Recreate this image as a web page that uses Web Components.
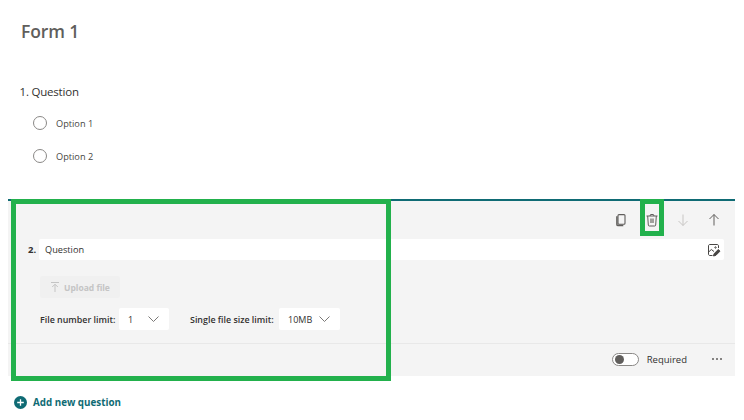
<!DOCTYPE html>
<html>
<head>
<meta charset="utf-8">
<style>
    html, body { margin: 0; background: #fff; }
    body { width: 744px; height: 420px; overflow: hidden; font-family: 'Open Sans', 'Noto Sans', sans-serif; }
</style>
</head>
<body>
<form-page>
    <form-title>Form 1</form-title>
    <question-preview label="1. Question">
        <radio-option>Option 1</radio-option>
        <radio-option>Option 2</radio-option>
    </question-preview>
    <question-editor number="2." title="Question"></question-editor>
    <add-question>Add new question</add-question>
</form-page>

<script>
class FormPage extends HTMLElement {
    constructor() {
        super();
        this.attachShadow({ mode: 'open' });
        this.shadowRoot.innerHTML = `
            <style>
                :host { display: flex; flex-direction: column; width: 744px; height: 420px; position: relative; }
            </style>
            <slot></slot>
        `;
    }
}

class FormTitle extends HTMLElement {
    constructor() {
        super();
        this.attachShadow({ mode: 'open' });
        this.shadowRoot.innerHTML = `
            <style>
                :host { display: block; height: 84px; padding: 19px 0 0 21px; box-sizing: border-box;
                    font-size: 17.500px; line-height: 25px; font-weight: 600; color: #605e5c; letter-spacing: -.1px; }
            </style>
            <slot></slot>
        `;
    }
}

class QuestionPreview extends HTMLElement {
    constructor() {
        super();
        this.attachShadow({ mode: 'open' });
        this.shadowRoot.innerHTML = `
            <style>
                :host { display: block; height: 115px; padding-left: 19.500px; box-sizing: border-box; }
                .label { font-size: 11.500px; letter-spacing: -.2px; line-height: 16px; color: #323130; margin-bottom: 16px; }
                .options { display: flex; flex-direction: column; gap: 19px; padding-left: 13.500px; }
            </style>
            <div class="label"></div>
            <div class="options"><slot></slot></div>
        `;
    }

    connectedCallback() {
        this.shadowRoot.querySelector('.label').textContent = this.getAttribute('label');
    }
}

class RadioOption extends HTMLElement {
    constructor() {
        super();
        this.attachShadow({ mode: 'open' });
        this.shadowRoot.innerHTML = `
            <style>
                :host { display: flex; align-items: center; gap: 9px; height: 14px; font-size: 9.200px; color: #484644; }
                i { width: 14px; height: 14px; box-sizing: border-box; border: 1px solid #8a8886; border-radius: 50%; }
            </style>
            <i></i><span><slot></slot></span>
        `;
    }
}

class DropDown extends HTMLElement {
    constructor() {
        super();
        this.attachShadow({ mode: 'open' });
        this.shadowRoot.innerHTML = `
            <style>
                :host { display: flex; align-items: center; justify-content: space-between; box-sizing: border-box;
                    height: 22px; background: #fff; border-radius: 2px; padding: 0 10px 0 9px;
                    font-size: 9px; color: #323130; }
                svg { width: 11px; height: 6px; }
            </style>
            <span><slot></slot></span>
            <svg viewBox="0 0 11 6"><path d="M.5.500 5.500 5.500 10.500.500" fill="none" stroke="#7a7876" stroke-width="1"/></svg>
        `;
    }
}

class QuestionEditor extends HTMLElement {
    constructor() {
        super();
        this.attachShadow({ mode: 'open' });
        this.shadowRoot.innerHTML = `
            <style>
                :host { display: block; width: 727px; height: 177px; margin-left: 8px; box-sizing: border-box;
                    background: #f4f4f4; border-top: 2px solid #0f6b74; position: relative; }
                .tools { display: flex; justify-content: flex-end; align-items: center; height: 38px; padding-right: 10px; gap: 8px; }
                .tool { width: 23px; height: 38px; display: flex; align-items: center; justify-content: center; }
                .tool svg { width: 14px; height: 14px; }
                .title-row { display: flex; align-items: center; height: 21px; padding-left: 20px; padding-right: 11px; }
                .num { width: 11px; font-size: 9.500px; font-weight: 700; color: #323130; }
                .input { flex: 1; height: 21px; background: #fff; border-radius: 2px; display: flex; align-items: center;
                    justify-content: space-between; padding: 0 3px 0 6px; font-size: 9.200px; color: #323130; }
                .input svg { width: 14px; height: 14px; }
                .upload { display: flex; align-items: center; gap: 5px; width: 80px; height: 22px; box-sizing: border-box;
                    margin: 16px 0 10px 32px; padding-left: 11px; background: #f0f0f0; border-radius: 2px;
                    font-size: 8.500px; font-weight: 700; color: #c4c4c4; }
                .upload svg { width: 8px; height: 10px; }
                .limits { display: flex; align-items: center; height: 22px; padding-left: 32px; font-size: 8.900px;
                    font-weight: 600; color: #323130; }
                .limits span.lbl { white-space: nowrap; }
                .limits .l1 { width: 79px; }
                .limits .l2 { width: 89px; }
                .first { width: 50px; margin-right: 21px; font-weight: 400; }
                .second { width: 61px; font-weight: 400; }
                .footer { position: absolute; left: 0; right: 0; bottom: 0; height: 33px; border-top: 1px solid #e8e8e8;
                    display: flex; align-items: center; justify-content: flex-end; padding: 0 13px 2px 0; box-sizing: border-box;
                    font-size: 9.500px; color: #323130; }
                .toggle { width: 27px; height: 13px; box-sizing: border-box; border: 1px solid #8a8886; border-radius: 7px;
                    background: #fff; display: flex; align-items: center; padding-left: 2px; margin-right: 8px; }
                .toggle i { width: 9px; height: 9px; border-radius: 50%; background: #605e5c; }
                .more { width: 10px; margin-left: 25px; display: flex; gap: 2px; }
                .more i { width: 2px; height: 2px; border-radius: 50%; background: #605e5c; }
            </style>
            <div class="tools">
                <div class="tool">
                    <svg viewBox="0 0 14 14" fill="none" stroke="#605e5c" stroke-width="1.100">
                        <rect x="4" y="1.600" width="7" height="9.600" rx="1"/>
                        <path d="M2.900 3.200v8.200c0 .8.500 1.200 1.200 1.200h5.200" stroke-width="1.500"/>
                    </svg>
                </div>
                <div class="tool">
                    <svg viewBox="0 0 14 14" fill="none" stroke="#605e5c" stroke-width="1">
                        <path d="M1.500 3h11M5 3l.6-1.500h2.800L9 3M2.700 3l.6 9c0 .6.400 1 1 1h5.400c.6 0 1-.4 1-1l.6-9"/>
                        <rect x="5" y="5.500" width="4" height="4.500" fill="#a19f9d" stroke="none"/>
                    </svg>
                </div>
                <div class="tool">
                    <svg viewBox="0 0 14 14" fill="none" stroke="#c8c6c4" stroke-width="1"><path d="M7 1.500v11M2.500 8l4.500 4.500L11.500 8"/></svg>
                </div>
                <div class="tool">
                    <svg viewBox="0 0 14 14" fill="none" stroke="#605e5c" stroke-width="1"><path d="M7 12.500v-11M2.500 6 7 1.500 11.500 6"/></svg>
                </div>
            </div>
            <div class="title-row">
                <span class="num"></span>
                <div class="input">
                    <span class="title"></span>
                    <svg viewBox="0 0 14 14" fill="none" stroke="#484644" stroke-width="1">
                        <path d="M5.500 12.500H3c-1 0-1.500-.5-1.500-1.500V3c0-1 .5-1.500 1.500-1.500h7c1 0 1.500.5 1.500 1.500v2"/>
                        <circle cx="8.500" cy="4.500" r=".7"/>
                        <path d="M1.700 9l2.600-2.500L7 8.500"/>
                        <path d="M6.500 13l.6-2.300 4.200-4.200 1.700 1.700-4.200 4.200z" fill="#484644"/>
                    </svg>
                </div>
            </div>
            <div class="upload">
                <svg viewBox="0 0 8 10" fill="none" stroke="#c4c4c4" stroke-width="1"><path d="M0 .5h8M4 10V2.500M1.200 5 4 2.200 6.800 5"/></svg>
                <span>Upload file</span>
            </div>
            <div class="limits">
                <span class="lbl l1">File number limit:</span>
                <drop-down class="first">1</drop-down>
                <span class="lbl l2">Single file size limit:</span>
                <drop-down class="second">10MB</drop-down>
            </div>
            <div class="footer">
                <div class="toggle"><i></i></div>
                <span>Required</span>
                <div class="more"><i></i><i></i><i></i></div>
            </div>
        `;
    }

    connectedCallback() {
        this.shadowRoot.querySelector('.num').textContent = this.getAttribute('number');
        this.shadowRoot.querySelector('.title').textContent = this.getAttribute('title');
    }
}

class AddQuestion extends HTMLElement {
    constructor() {
        super();
        this.attachShadow({ mode: 'open' });
        this.shadowRoot.innerHTML = `
            <style>
                :host { display: flex; align-items: center; gap: 6px; height: 14px; margin: 19px 0 0 14px;
                    font-size: 9.800px; font-weight: 700; color: #0f6b74; }
                svg { width: 13px; height: 13px; }
            </style>
            <svg viewBox="0 0 13 13">
                <circle cx="6.500" cy="6.500" r="6.500" fill="#0f6b74"/>
                <path d="M6.500 3.200v6.600M3.200 6.500h6.600" stroke="#fff" stroke-width="1.300"/>
            </svg>
            <span><slot></slot></span>
        `;
    }
}

// green markers drawn over the screenshot
class HighlightBox extends HTMLElement {
    constructor() {
        super();
        this.attachShadow({ mode: 'open' });
        this.shadowRoot.innerHTML = `
            <style>
                :host { display: block; position: absolute; box-sizing: border-box; border: 5px solid #22b14c; pointer-events: none; }
            </style>
        `;
    }
}

customElements.define('form-page', FormPage);
customElements.define('form-title', FormTitle);
customElements.define('question-preview', QuestionPreview);
customElements.define('radio-option', RadioOption);
customElements.define('drop-down', DropDown);
customElements.define('question-editor', QuestionEditor);
customElements.define('add-question', AddQuestion);
customElements.define('highlight-box', HighlightBox);

const page = document.querySelector('form-page');
const first = document.createElement('highlight-box');
first.style.cssText = 'left:11px;top:199px;width:380px;height:182px';
const second = document.createElement('highlight-box');
second.style.cssText = 'left:640px;top:199px;width:24px;height:37px';
page.append(first, second);
</script>
</body>
</html>
